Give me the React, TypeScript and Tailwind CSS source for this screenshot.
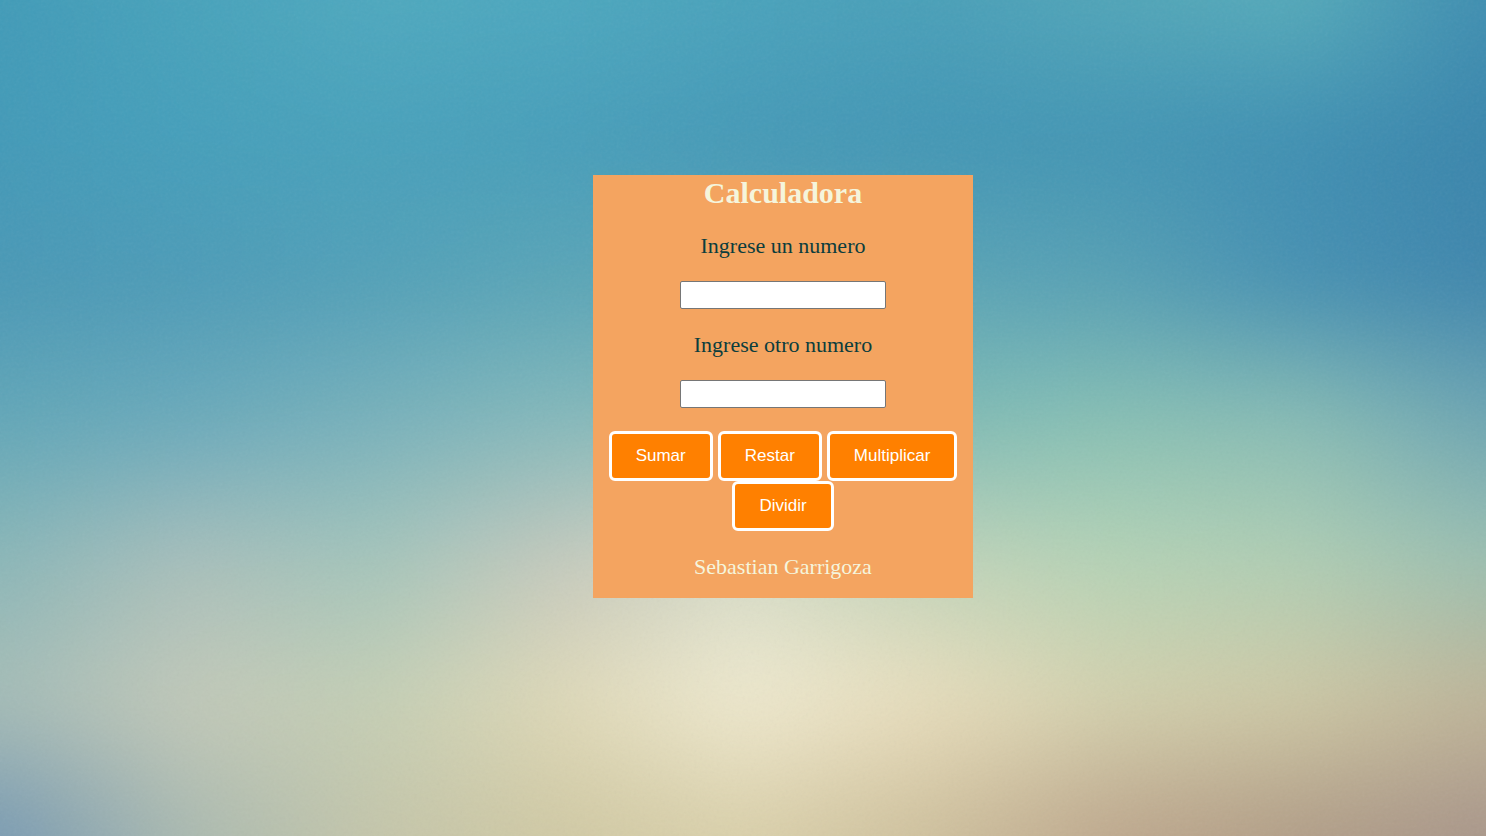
import { useState } from "react";

type Row = { y: number; colors: string[] };

const WIDTH = 1486;
const HEIGHT = 836;
const BLEED = 120;

// Colour samples of the backdrop, evenly spaced from left to right on each row.
const rows: Row[] = [
  { y: 0, colors: ["#419bb8", "#48a3bb", "#4fa9bf", "#4da8bf", "#4aa3bc", "#4aa0b9", "#52a6b9", "#56abba", "#3f8eb1"] },
  { y: 140, colors: ["#439ab8", "#459fbb", "#48a1bb", "#479eba", "#4599b7", "#4296b5", "#4295b4", "#3f8fb2", "#3a86ac"] },
  { y: 280, colors: ["#4a98b6", "#4d9bb7", "#52a0b8", "#5aa5b7", "#5aa4b7", "#5aa4b6", "#57a0b4", "#4690b2", "#3f86ad"] },
  { y: 420, colors: ["#62a7b8", "#6aaabb", "#78b1bb", "#85b9bb", "#85bab8", "#80bcb6", "#88c0b4", "#88bcb4", "#6ea6b3"] },
  { y: 560, colors: ["#8bb7b8", "#a9bfbb", "#a4c5bb", "#c6c9bd", "#d7dcc8", "#c2d4ba", "#b5d3b6", "#b0ceb4", "#9cc0b1"] },
  { y: 700, colors: ["#a7bdb7", "#c3c9b9", "#c5cfb5", "#dfd9b8", "#f0ead0", "#e9debd", "#d4d1ae", "#cfc9a6", "#c0b598"] },
  { y: 836, colors: ["#7799b2", "#a9b9b0", "#c4c5aa", "#cfc8a3", "#d9cfa9", "#cdbf9c", "#bda68c", "#b09c86", "#a8958a"] },
];

function Backdrop() {
  const area = {
    x: -BLEED,
    y: -BLEED,
    width: WIDTH + 2 * BLEED,
    height: HEIGHT + 2 * BLEED,
  };
  return (
    <svg
      aria-hidden="true"
      className="absolute inset-0 -z-10 h-full w-full"
      viewBox={`0 0 ${WIDTH} ${HEIGHT}`}
      preserveAspectRatio="none"
    >
      <defs>
        {rows.map((row, i) => {
          const from = i === 0 ? -BLEED * 2 : rows[i - 1].y;
          const to = i === 0 ? -BLEED : row.y;
          return (
            <g key={row.y}>
              <linearGradient id={`row-${i}`} gradientUnits="userSpaceOnUse" x1="0" x2={WIDTH} y1="0" y2="0">
                {row.colors.map((color, j) => (
                  <stop key={j} offset={j / (row.colors.length - 1)} stopColor={color} />
                ))}
              </linearGradient>
              <linearGradient id={`fade-${i}`} gradientUnits="userSpaceOnUse" x1="0" x2="0" y1={from} y2={to}>
                <stop offset="0" stopColor="#fff" stopOpacity="0" />
                <stop offset="1" stopColor="#fff" />
              </linearGradient>
              <mask id={`mask-${i}`} maskUnits="userSpaceOnUse" {...area}>
                <rect {...area} fill={`url(#fade-${i})`} />
              </mask>
            </g>
          );
        })}
        <filter id="soften" filterUnits="userSpaceOnUse" colorInterpolationFilters="sRGB" {...area}>
          <feGaussianBlur stdDeviation="32" />
        </filter>
        <filter id="grain" x="0" y="0" width="100%" height="100%">
          <feTurbulence type="fractalNoise" baseFrequency="0.35" numOctaves="2" />
          <feColorMatrix type="saturate" values="0" />
        </filter>
      </defs>
      <g filter="url(#soften)">
        {rows.map((row, i) => (
          <rect key={row.y} {...area} fill={`url(#row-${i})`} mask={`url(#mask-${i})`} />
        ))}
      </g>
      <rect width={WIDTH} height={HEIGHT} filter="url(#grain)" opacity="0.06" />
    </svg>
  );
}

const operations: { name: string; run: (a: number, b: number) => number }[] = [
  { name: "Sumar", run: (a, b) => a + b },
  { name: "Restar", run: (a, b) => a - b },
  { name: "Multiplicar", run: (a, b) => a * b },
  { name: "Dividir", run: (a, b) => a / b },
];

type FieldProps = { id: string; label: string; value: string; onChange: (value: string) => void };

function Field({ id, label, value, onChange }: FieldProps) {
  return (
    <div className="flex flex-col items-center gap-[22px]">
      <label htmlFor={id} className="text-[22px] leading-[26px] text-[#0b3d3d]">
        {label}
      </label>
      <input
        id={id}
        type="text"
        inputMode="decimal"
        value={value}
        onChange={(e) => onChange(e.target.value)}
        className="h-7 w-[206px] rounded-xs border border-[#767676] bg-white px-1 font-['Liberation_Sans',sans-serif] text-[17px] text-black"
      />
    </div>
  );
}

export default function App() {
  const [first, setFirst] = useState("");
  const [second, setSecond] = useState("");

  return (
    <div className="relative isolate flex min-h-screen items-start justify-center pt-[175px] pb-10 pl-20 font-['Liberation_Serif',serif]">
      <Backdrop />
      <main className="flex w-full max-w-[380px] flex-col items-center gap-[23px] bg-[#f4a460] pb-[18px] text-center">
        <h1 className="text-[30px] leading-[35px] font-bold text-[#f5f5dc]">Calculadora</h1>
        <Field id="first" label="Ingrese un numero" value={first} onChange={setFirst} />
        <Field id="second" label="Ingrese otro numero" value={second} onChange={setSecond} />
        <div className="flex flex-wrap justify-center gap-x-[5px]">
          {operations.map(({ name, run }) => (
            <button
              key={name}
              type="button"
              onClick={() => window.alert(run(Number(first), Number(second)))}
              className="cursor-pointer rounded-md border-3 border-white bg-[#ff8000] px-6 py-3 font-['Liberation_Sans',sans-serif] text-[17px] leading-5 text-white"
            >
              {name}
            </button>
          ))}
        </div>
        <p className="text-[22px] leading-[26px] text-[#f5f5dc]">Sebastian Garrigoza</p>
      </main>
    </div>
  );
}
